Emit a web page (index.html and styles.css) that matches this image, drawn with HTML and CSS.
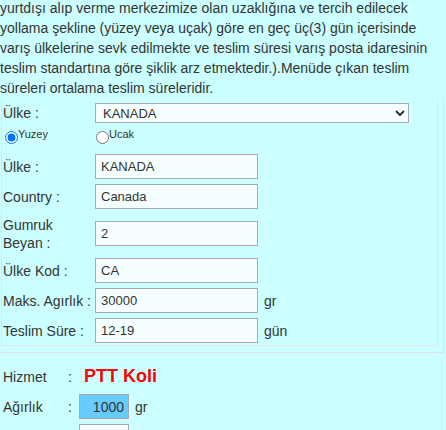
FILE: index.html
```html
<!DOCTYPE html>
<html lang="tr">
<head>
    <meta charset="UTF-8">
    <meta name="viewport" content="width=device-width, initial-scale=1.0">
    <title>Yurtdışı Gönderi</title>
    <link rel="stylesheet" href="styles.css">
</head>
<body>

    <p class="note">yurtdışı alıp verme merkezimize olan uzaklığına ve tercih edilecek yollama şekline (yüzey veya uçak) göre en geç üç(3) gün içerisinde varış ülkelerine sevk edilmekte ve teslim süresi varış posta idaresinin teslim standartına göre şiklik arz etmektedir.).Menüde çıkan teslim süreleri ortalama teslim süreleridir.</p>

    <div class="frame">
        <div class="box">
            <div class="form">
                <label class="lbl">Ülke :</label>
                <select class="sel"><option>KANADA</option></select>

                <label class="opt opt-first"><input type="radio" name="tip" checked><span>Yuzey</span></label>
                <label class="opt"><input type="radio" name="tip"><span>Ucak</span></label>

                <label class="lbl">Ülke :</label>
                <div class="cell"><input class="txt" type="text" value="KANADA"></div>

                <label class="lbl">Country :</label>
                <div class="cell"><input class="txt" type="text" value="Canada"></div>

                <label class="lbl lbl-two">Gumruk<br>Beyan :</label>
                <div class="cell"><input class="txt" type="text" value="2"></div>

                <label class="lbl">Ülke Kod :</label>
                <div class="cell"><input class="txt" type="text" value="CA"></div>

                <label class="lbl">Maks. Agırlık :</label>
                <div class="cell"><input class="txt" type="text" value="30000"><span class="unit">gr</span></div>

                <label class="lbl">Teslim Süre :</label>
                <div class="cell"><input class="txt" type="text" value="12-19"><span class="unit">gün</span></div>
            </div>
        </div>
    </div>

    <div class="calc">
        <span class="lbl">Hizmet</span>
        <span class="colon">:</span>
        <span class="service">PTT Koli</span>

        <span class="lbl">Ağırlık</span>
        <span class="colon">:</span>
        <div class="cell"><input class="num num-blue" type="text" value="1000"><span class="unit">gr</span></div>

        <span class="lbl"></span>
        <span class="colon"></span>
        <div class="cell"><input class="num" type="text" value=""></div>
    </div>

</body>
</html>
```

FILE: styles.css
```css
body {
    font-family: "Liberation Sans", Arial, sans-serif;
    font-size: 13px;
    color: #333;
    background: #ccffff;
    margin: 0;
    padding: 0;
    overflow: hidden;
}

.note {
    width: 440px;
    margin: -2px 0 0 0;
    font-size: 14px;
    line-height: 20px;
}

.frame {
    width: 443px;
    margin-top: -1px;
    padding: 3px 0 6px 0;
    border-right: 1px solid #e3e3e3;
    border-bottom: 1px solid #e3e3e3;
}

.box {
    width: 434px;
    margin-left: 1px;
    padding: 3px 0 2px 1px;
    border-left: 1px solid #e3e3e3;
    border-right: 1px solid #e3e3e3;
    border-bottom: 1px solid #e3e3e3;
}

.form {
    display: grid;
    grid-template-columns: 92px auto;
    row-gap: 5px;
    align-items: center;
}

.lbl {
    font-size: 14px;
    line-height: 18px;
}

.lbl-two {
    padding: 1.5px 0;
}

.sel {
    width: 314px;
    height: 20px;
    margin: 0;
    padding: 0 0 0 3px;
    font-family: "Liberation Sans", Arial, sans-serif;
    font-size: 13px;
    color: #333;
    background: #f5ffff;
    border: 1px solid #a9a9a9;
    border-radius: 0;
}

.opt {
    display: flex;
    align-items: flex-start;
    height: 21px;
    font-size: 11px;
    line-height: 13px;
}

.opt input {
    width: 13px;
    height: 13px;
    margin: 3px 0 0 1px;
}

.opt-first input {
    margin-left: 2px;
}

.cell {
    display: flex;
    align-items: center;
}

.txt {
    box-sizing: border-box;
    width: 163px;
    height: 25px;
    margin: 0;
    padding: 0 5px;
    font-family: "Liberation Sans", Arial, sans-serif;
    font-size: 13px;
    color: #333;
    background: #f5ffff;
    border: 1px solid #a9a9a9;
    border-radius: 0;
}

.unit {
    margin-left: 6px;
    font-size: 14px;
}

.calc {
    display: grid;
    grid-template-columns: 65px 11px auto;
    grid-auto-rows: 25px;
    row-gap: 5px;
    align-items: center;
    width: 438px;
    margin-top: 7px;
    padding: 4px 0 0 3px;
    border-right: 1px solid #e3e3e3;
}

.colon {
    font-size: 14px;
}

.service {
    margin-left: 5px;
    font-size: 18px;
    font-weight: bold;
    color: #ff0000;
}

.num {
    box-sizing: border-box;
    width: 50px;
    height: 25px;
    margin: 0;
    padding: 0 4px;
    text-align: right;
    font-family: "Liberation Sans", Arial, sans-serif;
    font-size: 14px;
    color: #333;
    background: #f5ffff;
    border: 1px solid #a9a9a9;
    border-radius: 0;
}

.num-blue {
    background: #66ccff;
}
```
